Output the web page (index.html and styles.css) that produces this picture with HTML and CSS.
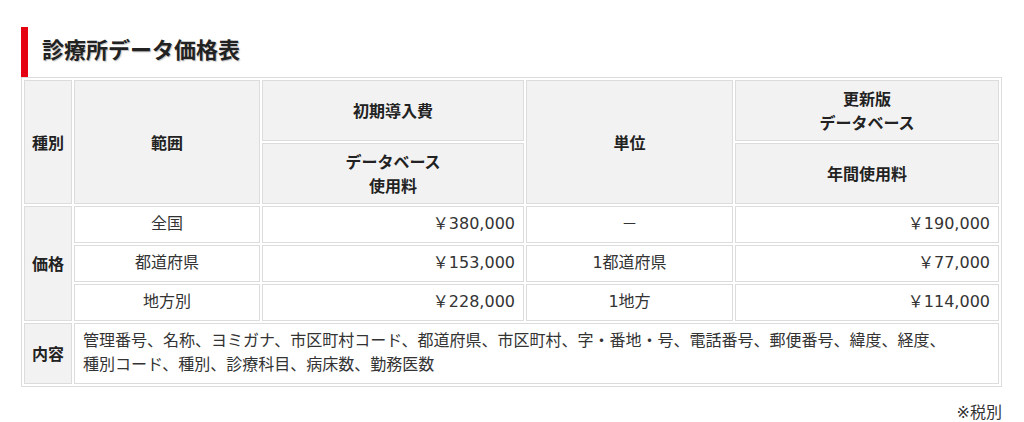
FILE: index.html
```html
<!DOCTYPE html>
<html lang="ja">
<head>
    <meta charset="UTF-8">
    <meta name="viewport" content="width=device-width, initial-scale=1.0">
    <title>診療所データ価格表</title>
    <link rel="stylesheet" href="styles.css">
</head>
<body>
    <div class="price-section">
        <h2 class="section-title">診療所データ価格表</h2>

        <table class="price-table">
            <colgroup>
                <col class="col-kind">
                <col class="col-range">
                <col class="col-initial">
                <col class="col-unit">
                <col class="col-update">
            </colgroup>
            <tr>
                <th class="kind" rowspan="2">種別</th>
                <th rowspan="2">範囲</th>
                <th>初期導入費</th>
                <th rowspan="2">単位</th>
                <th>更新版<br>データベース</th>
            </tr>
            <tr>
                <th>データベース<br>使用料</th>
                <th>年間使用料</th>
            </tr>
            <tr>
                <th class="kind" rowspan="3">価格</th>
                <td class="center">全国</td>
                <td class="price">￥380,000</td>
                <td class="center">－</td>
                <td class="price">￥190,000</td>
            </tr>
            <tr>
                <td class="center">都道府県</td>
                <td class="price">￥153,000</td>
                <td class="center">1都道府県</td>
                <td class="price">￥77,000</td>
            </tr>
            <tr>
                <td class="center">地方別</td>
                <td class="price">￥228,000</td>
                <td class="center">1地方</td>
                <td class="price">￥114,000</td>
            </tr>
            <tr>
                <th class="kind">内容</th>
                <td class="contents" colspan="4">管理番号、名称、ヨミガナ、市区町村コード、都道府県、市区町村、字・番地・号、電話番号、郵便番号、緯度、経度、種別コード、種別、診療科目、病床数、勤務医数</td>
            </tr>
        </table>

        <p class="tax-note">※税別</p>
    </div>
</body>
</html>
```

FILE: styles.css
```css
body {
    margin: 0;
    background-color: #ffffff;
    color: #333;
    font-family: "DejaVu Sans", "Noto Sans CJK JP", sans-serif;
    font-size: 16px;
}

.price-section {
    width: 981px;
    margin: 0 0 0 21px;
    padding-top: 27px;
}

.section-title {
    margin: 0;
    padding: 6px 0 14px 14px;
    border-left: 7px solid #e50012;
    font-family: "Noto Sans CJK JP", sans-serif;
    font-size: 22px;
    font-weight: bold;
    line-height: 30px;
    color: #222;
    text-shadow: 1px 1px 1px rgba(0, 0, 0, 0.25);
}

.price-table {
    width: 981px;
    table-layout: fixed;
    border-collapse: separate;
    border-spacing: 2px;
    border: 1px solid #dcdcdc;
}

.col-kind { width: 48px; }
.col-range { width: 186px; }
.col-initial { width: 262px; }
.col-unit { width: 207px; }
.col-update { width: 264px; }

.price-table th,
.price-table td {
    padding: 5px 8px 6px;
    border: 1px solid #dcdcdc;
    line-height: 24px;
}

.price-table th {
    background-color: #f2f2f2;
    font-family: "Noto Sans CJK JP", sans-serif;
    font-weight: bold;
    text-align: center;
    color: #222;
}

.price-table th.kind {
    padding-left: 0;
    padding-right: 0;
    white-space: nowrap;
}

.price-table td {
    background-color: #ffffff;
    text-align: left;
}

.price-table .center {
    text-align: center;
}

.price-table .price {
    text-align: right;
}

.price-table .contents {
    padding-right: 52px;
}

.tax-note {
    margin: 14px 0 0;
    text-align: right;
    line-height: 24px;
}
```
